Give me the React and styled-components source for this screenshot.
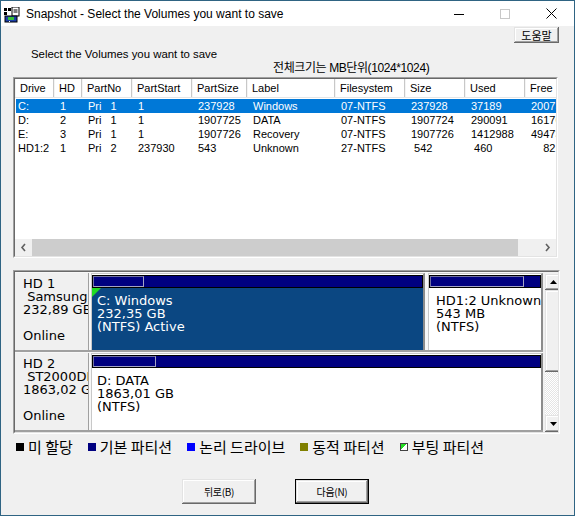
import React from 'react';
import styled, { createGlobalStyle, css } from 'styled-components';

const GlobalStyle = createGlobalStyle`
  html, body {
    margin: 0;
    padding: 0;
    background: #f0f0f0;
  }
  * {
    box-sizing: border-box;
  }
`;

const columns = [
  { name: 'Drive', w: 39 },
  { name: 'HD', w: 28 },
  { name: 'PartNo', w: 50 },
  { name: 'PartStart', w: 60 },
  { name: 'PartSize', w: 55 },
  { name: 'Label', w: 88 },
  { name: 'Filesystem', w: 70 },
  { name: 'Size', w: 60 },
  { name: 'Used', w: 60 },
  { name: 'Free', w: 60 },
];

const volumes = [
  ['C:', '1', 'Pri   1', '1', '237928', 'Windows', '07-NTFS', '237928', '37189', '200739'],
  ['D:', '2', 'Pri   1', '1', '1907725', 'DATA', '07-NTFS', '1907724', '290091', '1617633'],
  ['E:', '3', 'Pri   1', '1', '1907726', 'Recovery', '07-NTFS', '1907726', '1412988', '494738'],
  ['HD1:2', '1', 'Pri   2', '237930', '543', 'Unknown', '27-NTFS', ' 542', ' 460', '    82'],
];

const legend = [
  { label: '미 할당', color: '#000000' },
  { label: '기본 파티션', color: '#000080' },
  { label: '논리 드라이브', color: '#0000ff' },
  { label: '동적 파티션', color: '#808000' },
  { label: '부팅 파티션', boot: true },
];

const raised = css`
  background: #f0f0f0;
  box-shadow: inset -1px -1px #696969, inset 1px 1px #e3e3e3,
    inset -2px -2px #a0a0a0, inset 2px 2px #ffffff;
`;

const App = () => {
  return (
    <>
      <GlobalStyle />
      <Window>
        <TitleBar>
          <AppIcon />
          <Title>Snapshot - Select the Volumes you want to save</Title>
          <Controls>
            <CtrlButton>
              <svg width="10" height="10" viewBox="0 0 10 10">
                <line x1="0" y1="5.5" x2="10" y2="5.5" stroke="#000" strokeWidth="1" />
              </svg>
            </CtrlButton>
            <CtrlButton>
              <svg width="10" height="10" viewBox="0 0 10 10">
                <rect x="0.5" y="0.5" width="9" height="9" fill="none" stroke="#c8c8c8" strokeWidth="1" />
              </svg>
            </CtrlButton>
            <CtrlButton>
              <svg width="11" height="11" viewBox="0 0 11 11">
                <path d="M0.5 0.5 L10.5 10.5 M10.5 0.5 L0.5 10.5" stroke="#000" strokeWidth="1" />
              </svg>
            </CtrlButton>
          </Controls>
        </TitleBar>

        <Body>
          <TopRow>
            <HelpButton>도움말</HelpButton>
          </TopRow>
          <Intro>Select the Volumes you want to save</Intro>
          <SizeNote>전체크기는 MB단위(1024*1024)</SizeNote>

          <ListFrame>
            <ListInner>
              <HeaderRow>
                {columns.map(c => (
                  <HeaderCell key={c.name} $w={c.w}>
                    {c.name}
                  </HeaderCell>
                ))}
              </HeaderRow>
              <Rows>
                {volumes.map((row, i) => (
                  <Row key={row[0]} $selected={i === 0}>
                    {row.map((v, j) => (
                      <Cell key={j} $w={columns[j].w} $first={j === 0}>
                        {v}
                      </Cell>
                    ))}
                  </Row>
                ))}
              </Rows>
              <HScroll>
                <HArrow>
                  <svg width="7" height="9" viewBox="0 0 7 9">
                    <path d="M5 1 L2 4.5 L5 8" fill="none" stroke="#606060" strokeWidth="1.6" />
                  </svg>
                </HArrow>
                <HTrack>
                  <HThumb />
                </HTrack>
                <HArrow>
                  <svg width="7" height="9" viewBox="0 0 7 9">
                    <path d="M2 1 L5 4.5 L2 8" fill="none" stroke="#606060" strokeWidth="1.6" />
                  </svg>
                </HArrow>
              </HScroll>
            </ListInner>
          </ListFrame>

          <DiskFrame>
            <DiskInner>
              <DiskList>
                <DiskRow>
                  <InfoBox>{'HD 1\n Samsung SSD\n232,89 GB\n\nOnline'}</InfoBox>
                  <Partition $w={334}>
                    <Bar>
                      <UsedMark style={{ width: '15.6%' }} />
                    </Bar>
                    <PartBody $fill="#0b4782" $color="#ffffff">
                      <BootMark />
                      {'C: Windows\n232,35 GB\n(NTFS) Active'}
                    </PartBody>
                  </Partition>
                  <Partition>
                    <Bar>
                      <UsedMark style={{ width: '85%' }} />
                    </Bar>
                    <PartBody $pad={7}>{'HD1:2 Unknown\n543 MB\n(NTFS)'}</PartBody>
                  </Partition>
                </DiskRow>
                <DiskRow>
                  <InfoBox>{'HD 2\n ST2000DM\n1863,02 GB\n\nOnline'}</InfoBox>
                  <Partition>
                    <Bar>
                      <UsedMark style={{ width: '14%' }} />
                    </Bar>
                    <PartBody>{'D: DATA\n1863,01 GB\n(NTFS)'}</PartBody>
                  </Partition>
                </DiskRow>
              </DiskList>
              <VScroll>
                <VArrow>
                  <svg width="7" height="4" viewBox="0 0 7 4">
                    <polygon points="0,4 7,4 3.5,0" fill="#000" />
                  </svg>
                </VArrow>
                <VThumb />
                <VTrack />
                <VArrow $h={17}>
                  <svg width="7" height="4" viewBox="0 0 7 4">
                    <polygon points="0,0 7,0 3.5,4" fill="#000" />
                  </svg>
                </VArrow>
              </VScroll>
            </DiskInner>
          </DiskFrame>

          <Legend>
            {legend.map(item => (
              <LegendItem key={item.label}>
                <Swatch $color={item.color} $boot={item.boot} />
                {item.label}
              </LegendItem>
            ))}
          </Legend>

          <ButtonRow>
            <DialogButton>뒤로(B)</DialogButton>
            <DialogButton $default>다음(N)</DialogButton>
          </ButtonRow>
        </Body>
      </Window>
    </>
  );
};

const AppIcon = () => (
  <IconWrap>
    <svg width="16" height="16" viewBox="0 0 16 16">
      <rect x="0" y="1" width="3" height="3" fill="#000" />
      <rect x="4" y="1" width="3" height="3" fill="#000" />
      <rect x="0" y="5" width="3" height="3" fill="#000" />
      <rect x="8" y="0" width="7" height="9" fill="#fff" stroke="#000" strokeWidth="1" />
      <line x1="9.5" y1="3" x2="13.5" y2="3" stroke="#000" />
      <line x1="9.5" y1="5" x2="13.5" y2="5" stroke="#000" />
      <rect x="1" y="9" width="12" height="6" fill="#1c3fa8" stroke="#000" strokeWidth="1" />
      <rect x="4" y="10" width="6" height="3" fill="#38c038" />
      <rect x="5" y="14" width="1" height="1" fill="#fff" />
    </svg>
  </IconWrap>
);

export default App;

const Window = styled.div`
  width: 575px;
  height: 516px;
  border: 1px solid #2f6483;
  display: flex;
  flex-direction: column;
  background: #f0f0f0;
  font-family: 'Liberation Sans', 'Noto Sans CJK KR', sans-serif;
  color: #000;
  overflow: hidden;
`;

const TitleBar = styled.div`
  display: flex;
  align-items: center;
  height: 25px;
  background: #ffffff;
  flex-shrink: 0;
`;

const IconWrap = styled.div`
  display: flex;
  margin-left: 3px;
  margin-top: 2px;
`;

const Title = styled.div`
  margin-left: 6px;
  font-size: 12px;
  flex: 1;
  white-space: nowrap;
`;

const Controls = styled.div`
  display: flex;
  height: 100%;
`;

const CtrlButton = styled.div`
  width: 46px;
  height: 100%;
  display: flex;
  align-items: center;
  justify-content: center;
`;

const Body = styled.div`
  flex: 1;
  display: flex;
  flex-direction: column;
  padding: 0 16px 0 12px;
  font-size: 11px;
`;

const TopRow = styled.div`
  display: flex;
  justify-content: flex-end;
  padding-top: 1px;
  margin-right: -1px;
`;

const HelpButton = styled.div`
  ${raised};
  width: 45px;
  height: 16px;
  display: flex;
  align-items: center;
  justify-content: center;
  font-family: 'Noto Sans CJK KR', sans-serif;
  font-size: 11px;
`;

const Intro = styled.div`
  margin-top: 4px;
  margin-left: 18px;
  line-height: 14px;
  font-size: 11.4px;
`;

const SizeNote = styled.div`
  margin-left: 260px;
  line-height: 14px;
  font-size: 12px;
  letter-spacing: -0.4px;
  margin-bottom: 2px;
`;

const ListFrame = styled.div`
  height: 181px;
  border: 1px solid;
  border-color: #a0a0a0 #ffffff #ffffff #a0a0a0;
  flex-shrink: 0;
`;

const ListInner = styled.div`
  height: 100%;
  border: 1px solid;
  border-color: #696969 #e3e3e3 #e3e3e3 #696969;
  background: #ffffff;
  display: flex;
  flex-direction: column;
  overflow: hidden;
`;

const HeaderRow = styled.div`
  display: flex;
  height: 19px;
  flex-shrink: 0;
  background: #ffffff;
  border-bottom: 1px solid #e5e5e5;
`;

const HeaderCell = styled.div`
  width: ${p => p.$w}px;
  flex-shrink: 0;
  padding-left: 5px;
  line-height: 18px;
  font-size: 11px;
  border-right: 1px solid #c8c8c8;
  box-shadow: inset 1px 0 #f4f4f4;
  white-space: nowrap;
`;

const Rows = styled.div`
  flex: 1;
  padding-top: 1px;
  overflow: hidden;
`;

const Row = styled.div`
  display: flex;
  height: 14px;
  margin-left: 1px;
  background: ${p => (p.$selected ? '#0078d7' : 'transparent')};
  color: ${p => (p.$selected ? '#ffffff' : '#000000')};
`;

const Cell = styled.div`
  width: ${p => (p.$first ? p.$w - 1 : p.$w)}px;
  flex-shrink: 0;
  padding-left: ${p => (p.$first ? 2 : 6)}px;
  line-height: 14px;
  font-size: 11px;
  white-space: pre;
  overflow: hidden;
`;

const HScroll = styled.div`
  display: flex;
  height: 17px;
  flex-shrink: 0;
  background: #f0f0f0;
`;

const HArrow = styled.div`
  width: 17px;
  display: flex;
  align-items: center;
  justify-content: center;
`;

const HTrack = styled.div`
  flex: 1;
  display: flex;
`;

const HThumb = styled.div`
  width: 486px;
  height: 100%;
  background: #cdcdcd;
`;

const DiskFrame = styled.div`
  margin-top: 12px;
  margin-right: -2px;
  height: 164px;
  flex-shrink: 0;
  border: 1px solid;
  border-color: #a0a0a0 #ffffff #ffffff #a0a0a0;
`;

const DiskInner = styled.div`
  height: 100%;
  border: 1px solid;
  border-color: #696969 #e3e3e3 #e3e3e3 #696969;
  background: #f0f0f0;
  display: flex;
  overflow: hidden;
`;

const DiskList = styled.div`
  flex: 1;
  display: flex;
  flex-direction: column;
`;

const DiskRow = styled.div`
  display: flex;
  height: 80px;
  flex-shrink: 0;
  padding-top: 1px;
  gap: 2px;
  background: #f7f7f7;
  border-bottom: 2px solid #a0a0a0;
`;

const mapFont = css`
  font-family: 'DejaVu Sans', sans-serif;
  font-size: 13px;
  line-height: 13px;
  white-space: pre;
`;

const InfoBox = styled.div`
  ${mapFont};
  width: 74px;
  flex-shrink: 0;
  padding: 4px 0 0 8px;
  background: #f0f0f0;
  border-right: 1px solid #a0a0a0;
  overflow: hidden;
`;

const Partition = styled.div`
  display: flex;
  flex-direction: column;
  ${p => (p.$w ? `width: ${p.$w}px; flex-shrink: 0;` : 'flex: 1; min-width: 0;')}
  background: #ffffff;
  border-left: 1px solid #c8c8c8;
  border-top: 1px solid #c8c8c8;
  border-right: 2px solid #8c8c8c;
  & + & {
    margin-left: 1px;
  }
`;

const Bar = styled.div`
  height: 13px;
  margin: 1px 0 0 0;
  border: 1px solid #000000;
  background: #000080;
  flex-shrink: 0;
`;

const UsedMark = styled.div`
  height: 100%;
  border: 1px solid #a4a4c4;
  border-left-color: #7070a0;
  border-top-color: #7070a0;
`;

const PartBody = styled.div`
  ${mapFont};
  position: relative;
  flex: 1;
  padding: 6px 0 0 ${p => p.$pad || 5}px;
  background: ${p => p.$fill || '#ffffff'};
  color: ${p => p.$color || '#000000'};
  overflow: hidden;
`;

const BootMark = styled.div`
  position: absolute;
  top: 0;
  left: 0;
  width: 0;
  height: 0;
  border-top: 9px solid #22dd22;
  border-right: 9px solid transparent;
`;

const VScroll = styled.div`
  width: 16px;
  flex-shrink: 0;
  margin: 2px 0 0 2px;
  display: flex;
  flex-direction: column;
`;

const VArrow = styled.div`
  ${raised};
  height: ${p => p.$h || 16}px;
  flex-shrink: 0;
  display: flex;
  align-items: center;
  justify-content: center;
`;

const VThumb = styled.div`
  ${raised};
  height: 82px;
  flex-shrink: 0;
`;

const VTrack = styled.div`
  flex: 1;
  background: repeating-conic-gradient(#ffffff 0 25%, #e4e4e4 0 50%) 0 0 / 2px 2px;
`;

const Legend = styled.div`
  display: flex;
  align-items: center;
  gap: 15px;
  margin-top: 5px;
  padding-left: 3px;
  height: 15px;
  font-family: 'Noto Sans CJK KR', sans-serif;
  font-size: 15px;
`;

const LegendItem = styled.div`
  display: flex;
  align-items: center;
  gap: 4px;
  white-space: pre;
`;

const Swatch = styled.span`
  width: 8px;
  height: 8px;
  background: ${p =>
    p.$boot ? 'linear-gradient(to bottom right, #22dd22 50%, #ffffff 50%)' : p.$color};
  border: ${p => (p.$boot ? '1px solid #404040' : 'none')};
`;

const ButtonRow = styled.div`
  display: flex;
  gap: 39px;
  margin-top: 25px;
  padding-left: 169px;
`;

const DialogButton = styled.div`
  ${raised};
  width: 74px;
  height: 25px;
  display: flex;
  align-items: center;
  justify-content: center;
  font-family: 'Noto Sans CJK KR', sans-serif;
  font-size: 10px;
  letter-spacing: -0.3px;
  ${p =>
    p.$default &&
    css`
      border: 1px solid #000000;
    `}
`;
